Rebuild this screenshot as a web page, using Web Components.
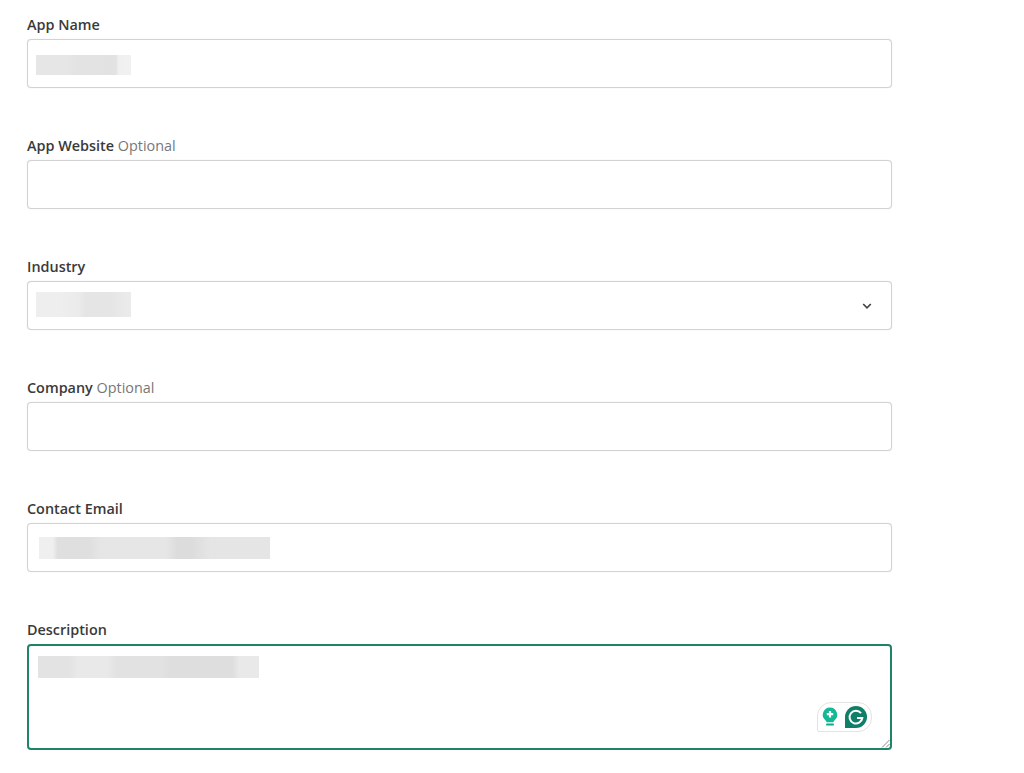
<!DOCTYPE html>
<html lang="en">
<head>
<meta charset="utf-8">
<title>App details</title>
<style>
  html, body { margin: 0; background: #fff; }
  body { height: 773px; overflow: hidden; font-family: "Open Sans", sans-serif; }
</style>
</head>
<body>
<app-form>
  <form-field label="App Name">
    <text-box><blur-block style="--w:95px;--h:20px;--mt:3px;--bg:linear-gradient(90deg,#e6e6e6 0 30%,#e3e3e3 45%,#e2e2e2 84%,#f0f0f0 87%,#f1f1f1 100%)"></blur-block></text-box>
  </form-field>
  <form-field label="App Website" optional>
    <text-box></text-box>
  </form-field>
  <form-field label="Industry">
    <text-box select><blur-block style="--w:95px;--h:25px;--mb:2px;--bg:linear-gradient(90deg,#eeeeee 0 25%,#ebebeb 45%,#e5e5e5 52% 78%,#e9e9e9 90%,#ebebeb 100%)"></blur-block></text-box>
  </form-field>
  <form-field label="Company" optional>
    <text-box></text-box>
  </form-field>
  <form-field label="Contact Email">
    <text-box style="--pad:11px"><blur-block style="--w:231px;--h:22px;--mt:1px;--bg:linear-gradient(90deg,#efefef 0 6%,#dfdfdf 8% 22%,#e6e6e6 27% 55%,#dcdcdc 60% 66%,#e5e5e5 74% 100%)"></blur-block></text-box>
  </form-field>
  <form-field label="Description">
    <text-box area style="--pad:9px"><blur-block style="--w:221px;--h:22px;--bg:linear-gradient(90deg,#e3e3e3 0 14%,#e9e9e9 18% 31%,#e2e2e2 36% 56%,#dedede 60% 88%,#e9e9e9 91% 100%)"></blur-block><grammarly-badge slot="overlay"></grammarly-badge></text-box>
  </form-field>
</app-form>

<script>
// stacks the fields at a fixed rhythm
class AppForm extends HTMLElement {
  constructor() {
    super();
    this.attachShadow({ mode: 'open' }).innerHTML = `
      <style>
        :host { display: flex; flex-direction: column; gap: 48px; width: 865px; padding: 15px 0 0 27px; }
      </style>
      <slot></slot>`;
  }
}

class FormField extends HTMLElement {
  constructor() {
    super();
    this.attachShadow({ mode: 'open' }).innerHTML = `
      <style>
        :host { display: block; }
        .lab {
          height: 20px; margin-bottom: 4px;
          font: 600 14.4px/20px "Open Sans", sans-serif; color: #3a3a3a;
          white-space: nowrap;
        }
        .opt { font-weight: 400; color: #777; }
      </style>
      <div class="lab"><span class="name"></span><span class="opt"></span></div>
      <slot></slot>`;
  }
  connectedCallback() {
    this.shadowRoot.querySelector('.name').textContent = this.getAttribute('label') || '';
    this.shadowRoot.querySelector('.opt').textContent = this.hasAttribute('optional') ? ' Optional' : '';
  }
}

class TextBox extends HTMLElement {
  constructor() {
    super();
    this.attachShadow({ mode: 'open' }).innerHTML = `
      <style>
        :host {
          display: flex; align-items: center; position: relative;
          box-sizing: border-box; height: 49px;
          padding: 0 var(--pad, 8px);
          background: #fff; border: 1px solid #d2d2d2; border-radius: 4px;
          box-shadow: 0 0 1px #d8d8d8;
        }
        :host([area]) {
          align-items: flex-start; height: 106px; padding-top: 10px;
          border: 2px solid #1d8468; border-radius: 4px; box-shadow: none;
        }
        .chev { display: none; position: absolute; right: 18px; top: 19px; }
        :host([select]) .chev { display: block; }
        .grip { display: none; position: absolute; right: 0; bottom: 0; }
        :host([area]) .grip { display: block; }
      </style>
      <slot></slot>
      <slot name="overlay"></slot>
      <svg class="chev" width="12" height="10" viewBox="0 0 12 10" fill="none" stroke="#444" stroke-width="1.7"><path d="M2.2 3 6 6.8 9.8 3"/></svg>
      <svg class="grip" width="9" height="9" viewBox="0 0 9 9" fill="none" stroke="#888" stroke-width="1"><path d="M1 8.5 8.5 1M5 8.5 8.5 5"/></svg>`;
  }
}

class BlurBlock extends HTMLElement {
  constructor() {
    super();
    this.attachShadow({ mode: 'open' }).innerHTML = `
      <style>
        :host {
          display: block; width: var(--w); height: var(--h);
          margin-top: var(--mt, 0); margin-bottom: var(--mb, 0);
          background: var(--bg, #e6e6e6);
        }
      </style>`;
  }
}

// the floating widget in the corner of the focused textarea
class GrammarlyBadge extends HTMLElement {
  constructor() {
    super();
    this.attachShadow({ mode: 'open' }).innerHTML = `
      <style>
        :host {
          display: flex; align-items: center; gap: 5px;
          position: absolute; right: 18px; bottom: 16px;
          box-sizing: border-box; width: 55px; height: 30px; padding: 0 3px;
          background: #fff; border: 1px solid #e3e3e3;
          border-radius: 14px 14px 14px 2px;
        }
        svg { display: block; flex: none; }
      </style>
      <svg width="18" height="22" viewBox="0 0 18 22">
        <path d="M9 1.5a7.2 7.2 0 0 0-4.6 12.7c.8.7 1.1 1.3 1.1 2.1h7c0-.8.3-1.4 1.1-2.1A7.2 7.2 0 0 0 9 1.5Z" fill="#15b894"/>
        <path d="M9 5v6.4M5.8 8.2h6.4" stroke="#fff" stroke-width="2.2"/>
        <path d="M6 18.6h6" stroke="#12a886" stroke-width="2" stroke-linecap="round"/>
      </svg>
      <svg width="24" height="24" viewBox="0 0 24 24">
        <path d="M12 1a11 11 0 0 1 0 22H1V12A11 11 0 0 1 12 1Z" fill="#0f7f69"/>
        <path d="M17 8.2A6.4 6.4 0 1 0 18.3 13H13" fill="none" stroke="#fff" stroke-width="2"/>
      </svg>`;
  }
}

customElements.define('app-form', AppForm);
customElements.define('form-field', FormField);
customElements.define('text-box', TextBox);
customElements.define('blur-block', BlurBlock);
customElements.define('grammarly-badge', GrammarlyBadge);
</script>
</body>
</html>
